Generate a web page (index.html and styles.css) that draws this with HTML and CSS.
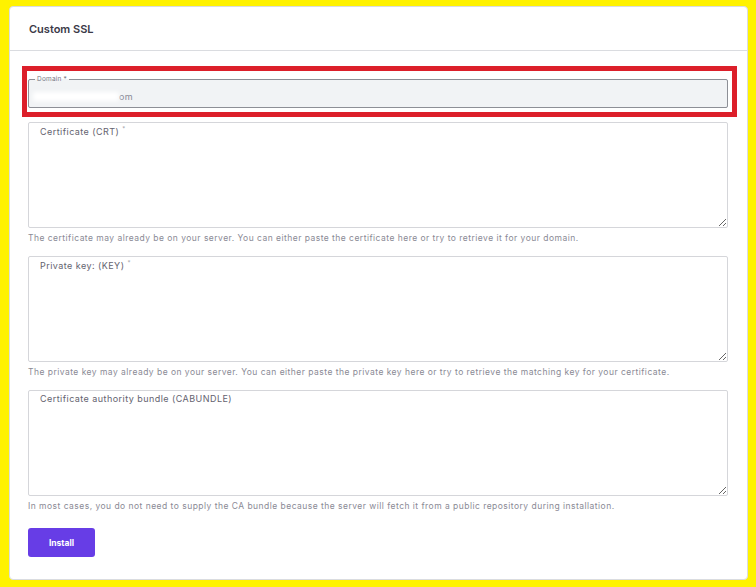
FILE: index.html
```html
<!DOCTYPE html>
<html lang="en">
<head>
  <meta charset="UTF-8">
  <meta name="viewport" content="width=device-width, initial-scale=1.0">
  <title>Custom SSL</title>
  <link rel="stylesheet" href="styles.css">
</head>
<body>
  <div class="card">
    <div class="card-header">Custom SSL</div>

    <form class="ssl-form">
      <!-- Domain (highlighted) -->
      <div class="highlight">
        <fieldset class="domain-field">
          <legend>Domain *</legend>
          <div class="domain-value"><span class="redacted"></span>om</div>
        </fieldset>
      </div>

      <!-- Certificate -->
      <div class="field">
        <textarea class="field-input"></textarea>
        <label class="field-label">Certificate (CRT) <sup>*</sup></label>
      </div>
      <p class="help">The certificate may already be on your server. You can either paste the certificate here or try to retrieve it for your domain.</p>

      <!-- Private key -->
      <div class="field">
        <textarea class="field-input"></textarea>
        <label class="field-label">Private key: (KEY) <sup>*</sup></label>
      </div>
      <p class="help">The private key may already be on your server. You can either paste the private key here or try to retrieve the matching key for your certificate.</p>

      <!-- CA bundle -->
      <div class="field">
        <textarea class="field-input"></textarea>
        <label class="field-label">Certificate authority bundle (CABUNDLE)</label>
      </div>
      <p class="help">In most cases, you do not need to supply the CA bundle because the server will fetch it from a public repository during installation.</p>

      <button type="button" class="btn-install">Install</button>
    </form>
  </div>
</body>
</html>
```

FILE: styles.css
```css
/* General Styles */
* {
  box-sizing: border-box;
}

html, body {
  height: 100%;
}

body {
  margin: 0;
  padding: 6px 8px 7px 9px;
  background-color: #fff200;
  font-family: Inter, "Noto Sans", Arial, sans-serif;
  color: #36344d;
}

.card {
  height: 100%;
  background-color: #fff;
  border: 1px solid #dadce0;
  border-radius: 4px;
}

.card-header {
  height: 44px;
  padding-left: 19px;
  display: flex;
  align-items: center;
  font-size: 11px;
  font-weight: 600;
  color: #3b3a48;
  border-bottom: 1px solid #dadce0;
}

.ssl-form {
  padding: 15px 19px 0 18px;
}

/* Red highlight box round the domain */
.highlight {
  margin: 0 -9px 0 -6px;
  padding: 4px 4px 4px 1px;
  border: 5px solid #dc1f2a;
}

.domain-field {
  margin: 0;
  padding: 0 6px;
  height: 33px;
  border: 1px solid #8d8f96;
  border-radius: 2px;
  background-color: #f1f3f5;
}

.domain-field legend {
  padding: 0 2px;
  font-size: 6.5px;
  line-height: 9px;
  letter-spacing: 0.2px;
  color: #7a7a86;
}

.domain-value {
  display: flex;
  align-items: center;
  height: 25px;
  font-size: 9px;
  letter-spacing: 0.3px;
  color: #8a8a96;
}

.redacted {
  display: inline-block;
  width: 86px;
  height: 9px;
  margin-left: -2px;
  background-color: #fff;
  filter: blur(2px);
}

/* Textareas with labels inside */
.field {
  position: relative;
  margin-top: 5px;
}

.field-input {
  display: block;
  width: 100%;
  height: 106px;
  margin: 0;
  border: 1px solid #d5d6da;
  border-radius: 2px;
  background-color: #fff;
  font-family: inherit;
}

.field-label {
  position: absolute;
  top: 3px;
  left: 12px;
  font-size: 9px;
  letter-spacing: 0.45px;
  color: #64636f;
}

.field-label sup {
  font-size: 6px;
  color: #9a9aa5;
}

.help {
  margin: 4px 0 12px;
  font-size: 8.5px;
  line-height: 12px;
  letter-spacing: 0.47px;
  color: #8a8a95;
}

.help + .field {
  margin-top: 0;
}

.btn-install {
  margin-top: 4px;
  width: 67px;
  height: 29px;
  border: none;
  border-radius: 3px;
  background-color: #673de6;
  color: #fff;
  font-family: inherit;
  font-size: 8.5px;
  font-weight: 700;
  cursor: pointer;
}
```
